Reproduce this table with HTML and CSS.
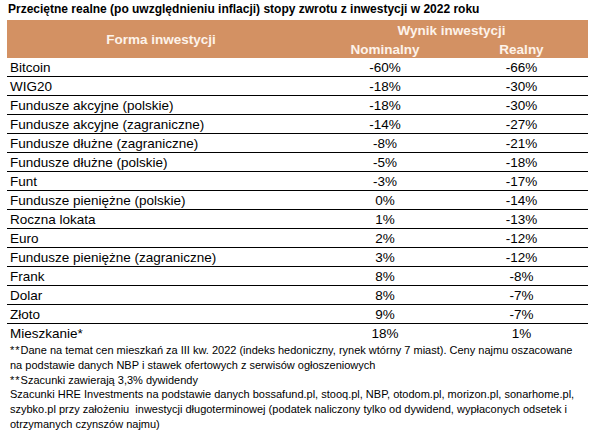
FILE: index.html
```html
<!DOCTYPE html>
<html lang="pl">
<head>
<meta charset="utf-8">
<link rel="stylesheet" href="styles.css">
</head>
<body>
<div class="page">
  <div class="title">Przeciętne realne (po uwzględnieniu inflacji) stopy zwrotu z inwestycji w 2022 roku</div>
  <table class="data">
    <colgroup><col class="c1"><col class="c2"><col class="c3"></colgroup>
    <thead>
      <tr class="h1"><th rowspan="2" class="forma">Forma inwestycji</th><th colspan="2">Wynik inwestycji</th></tr>
      <tr class="h2"><th>Nominalny</th><th>Realny</th></tr>
    </thead>
    <tbody>
      <tr><td>Bitcoin</td><td>-60%</td><td>-66%</td></tr>
      <tr><td>WIG20</td><td>-18%</td><td>-30%</td></tr>
      <tr><td>Fundusze akcyjne (polskie)</td><td>-18%</td><td>-30%</td></tr>
      <tr><td>Fundusze akcyjne (zagraniczne)</td><td>-14%</td><td>-27%</td></tr>
      <tr><td>Fundusze dłużne (zagraniczne)</td><td>-8%</td><td>-21%</td></tr>
      <tr><td>Fundusze dłużne (polskie)</td><td>-5%</td><td>-18%</td></tr>
      <tr><td>Funt</td><td>-3%</td><td>-17%</td></tr>
      <tr><td>Fundusze pieniężne (polskie)</td><td>0%</td><td>-14%</td></tr>
      <tr><td>Roczna lokata</td><td>1%</td><td>-13%</td></tr>
      <tr><td>Euro</td><td>2%</td><td>-12%</td></tr>
      <tr><td>Fundusze pieniężne (zagraniczne)</td><td>3%</td><td>-12%</td></tr>
      <tr><td>Frank</td><td>8%</td><td>-8%</td></tr>
      <tr><td>Dolar</td><td>8%</td><td>-7%</td></tr>
      <tr><td>Złoto</td><td>9%</td><td>-7%</td></tr>
      <tr class="last"><td>Mieszkanie*</td><td>18%</td><td>1%</td></tr>
    </tbody>
  </table>
  <div class="notes">
    <p><span class="ast">**</span>Dane na temat cen mieszkań za III kw. 2022 (indeks hedoniczny, rynek wtórny 7 miast). Ceny najmu oszacowane<br>na podstawie danych NBP i stawek ofertowych z serwisów ogłoszeniowych</p>
    <p><span class="ast">**</span>Szacunki zawierają 3,3% dywidendy</p>
    <p>Szacunki HRE Investments na podstawie danych bossafund.pl, stooq.pl, NBP, otodom.pl, morizon.pl, sonarhome.pl,<br>szybko.pl przy założeniu&nbsp; inwestycji długoterminowej (podatek naliczony tylko od dywidend, wypłaconych odsetek i<br>otrzymanych czynszów najmu)</p>
  </div>
</div>
</body>
</html>
```
FILE: styles.css
```css
html, body {
  margin: 0;
  padding: 0;
  background: #ffffff;
}
.page {
  width: 600px;
  padding: 0 12px 0 7px;
  box-sizing: border-box;
  color: #000;
}
.title {
  font-family: "Liberation Sans", Arial, sans-serif;
  font-weight: bold;
  font-size: 12px;
  height: 20px;
  line-height: 19px;
  padding-left: 1px;
}
.data {
  width: 581px;
  border-collapse: collapse;
  table-layout: fixed;
  font-family: "Liberation Sans", Arial, sans-serif;
  font-size: 13.5px;
}
.c1 { width: 308px; }
.c2 { width: 140px; }
.c3 { width: 133px; }
.data thead th {
  background: #d39163;
  color: #fdf3ea;
  font-weight: bold;
  font-size: 13.5px;
  padding: 0;
  box-sizing: border-box;
}
.data .h1 th { height: 19px; padding-top: 3px; line-height: 16px; }
.data .h1 th.forma { padding-top: 0; line-height: 17px; }
.data .h2 th { height: 19px; padding-top: 3px; line-height: 16px; }
.data tbody td {
  height: 18px;
  padding: 0;
  border-bottom: 1px solid #000;
  text-align: center;
  line-height: 17px;
  vertical-align: bottom;
}
.data tbody td:first-child {
  text-align: left;
  padding-left: 3px;
}
.data tbody tr.last td {
  border-bottom: none;
}
.notes {
  font-family: "Liberation Sans", Arial, sans-serif;
  font-size: 11px;
  line-height: 14.8px;
  padding-left: 3px;
  padding-top: 1px;
  white-space: nowrap;
}
.notes p {
  margin: 0;
}
.ast {
  letter-spacing: 1px;
}
```
